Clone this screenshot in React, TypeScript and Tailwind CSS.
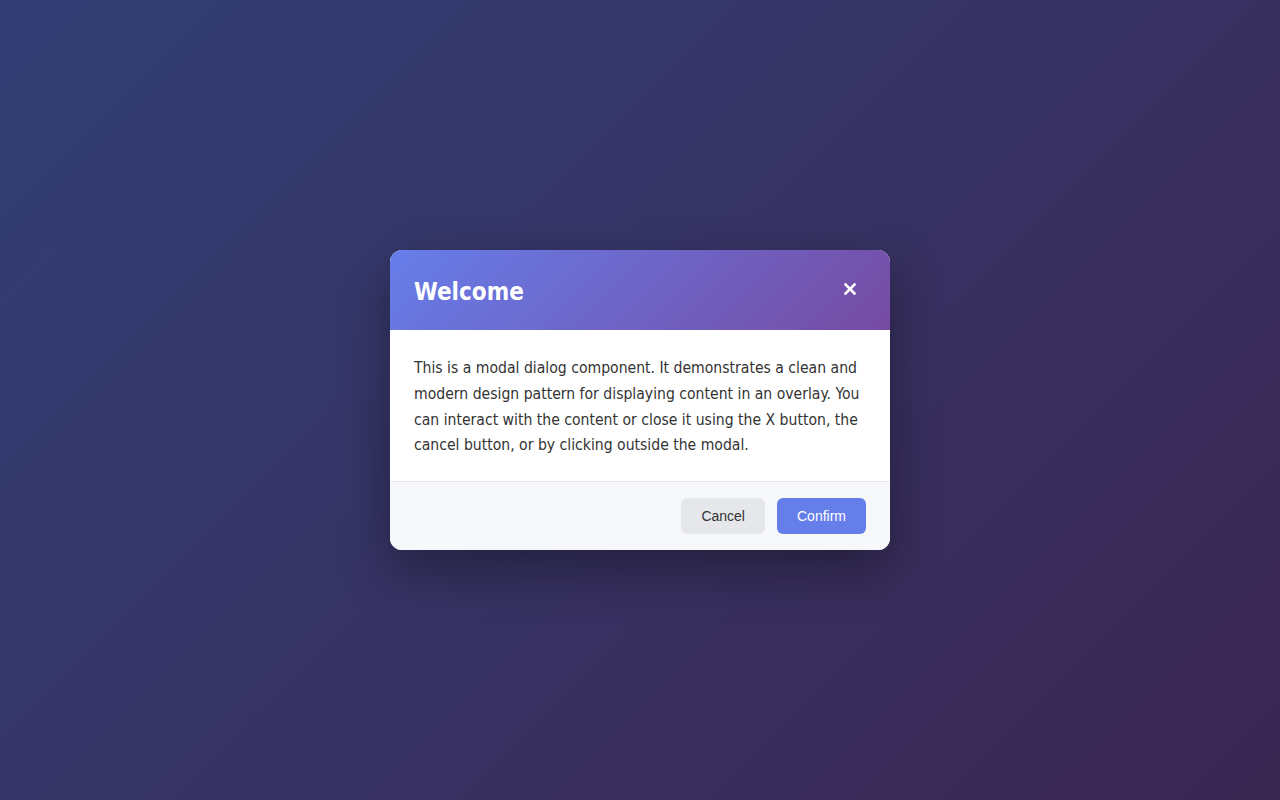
export default function App() {
  return (
    <div className="flex h-[800px] w-full items-center justify-center bg-[linear-gradient(135deg,#323f75_0%,#3b2652_100%)] font-['DejaVu_Sans_Condensed','DejaVu_Sans',sans-serif]">
      <div className="w-[500px] overflow-hidden rounded-xl bg-white shadow-[0_20px_50px_rgba(0,0,0,0.35)]">
        <div className="flex h-20 items-center justify-between bg-[linear-gradient(135deg,#667eea_0%,#764ba2_100%)] px-6">
          <h2 className="pt-1 text-2xl font-bold text-white">Welcome</h2>
          <button type="button" className="flex h-8 w-8 items-center justify-center pb-0.5 text-white">
            <svg width="12" height="12" viewBox="0 0 12 12">
              <path d="M1.5 1.5L10.5 10.5M10.5 1.5L1.5 10.5" stroke="white" strokeWidth="2.6" strokeLinecap="square" />
            </svg>
          </button>
        </div>
        <div className="px-6 pb-[22px] pt-[26px] text-[15.6px] leading-[25.6px] text-[#333333]">
          This is a modal dialog component. It demonstrates a clean and modern design pattern for
          displaying content in an overlay. You can interact with the content or close it using the X
          button, the cancel button, or by clicking outside the modal.
        </div>
        <div className="flex justify-end gap-3 border-t border-[#e5e7eb] bg-[#f7f8fa] px-6 py-4 font-['Liberation_Sans',Arial,sans-serif] text-sm">
          <button type="button" className="h-9 rounded-md bg-[#e5e7eb] px-5 text-[#333333]">
            Cancel
          </button>
          <button type="button" className="h-9 rounded-md bg-[#667eea] px-5 text-white">
            Confirm
          </button>
        </div>
      </div>
    </div>
  );
}
